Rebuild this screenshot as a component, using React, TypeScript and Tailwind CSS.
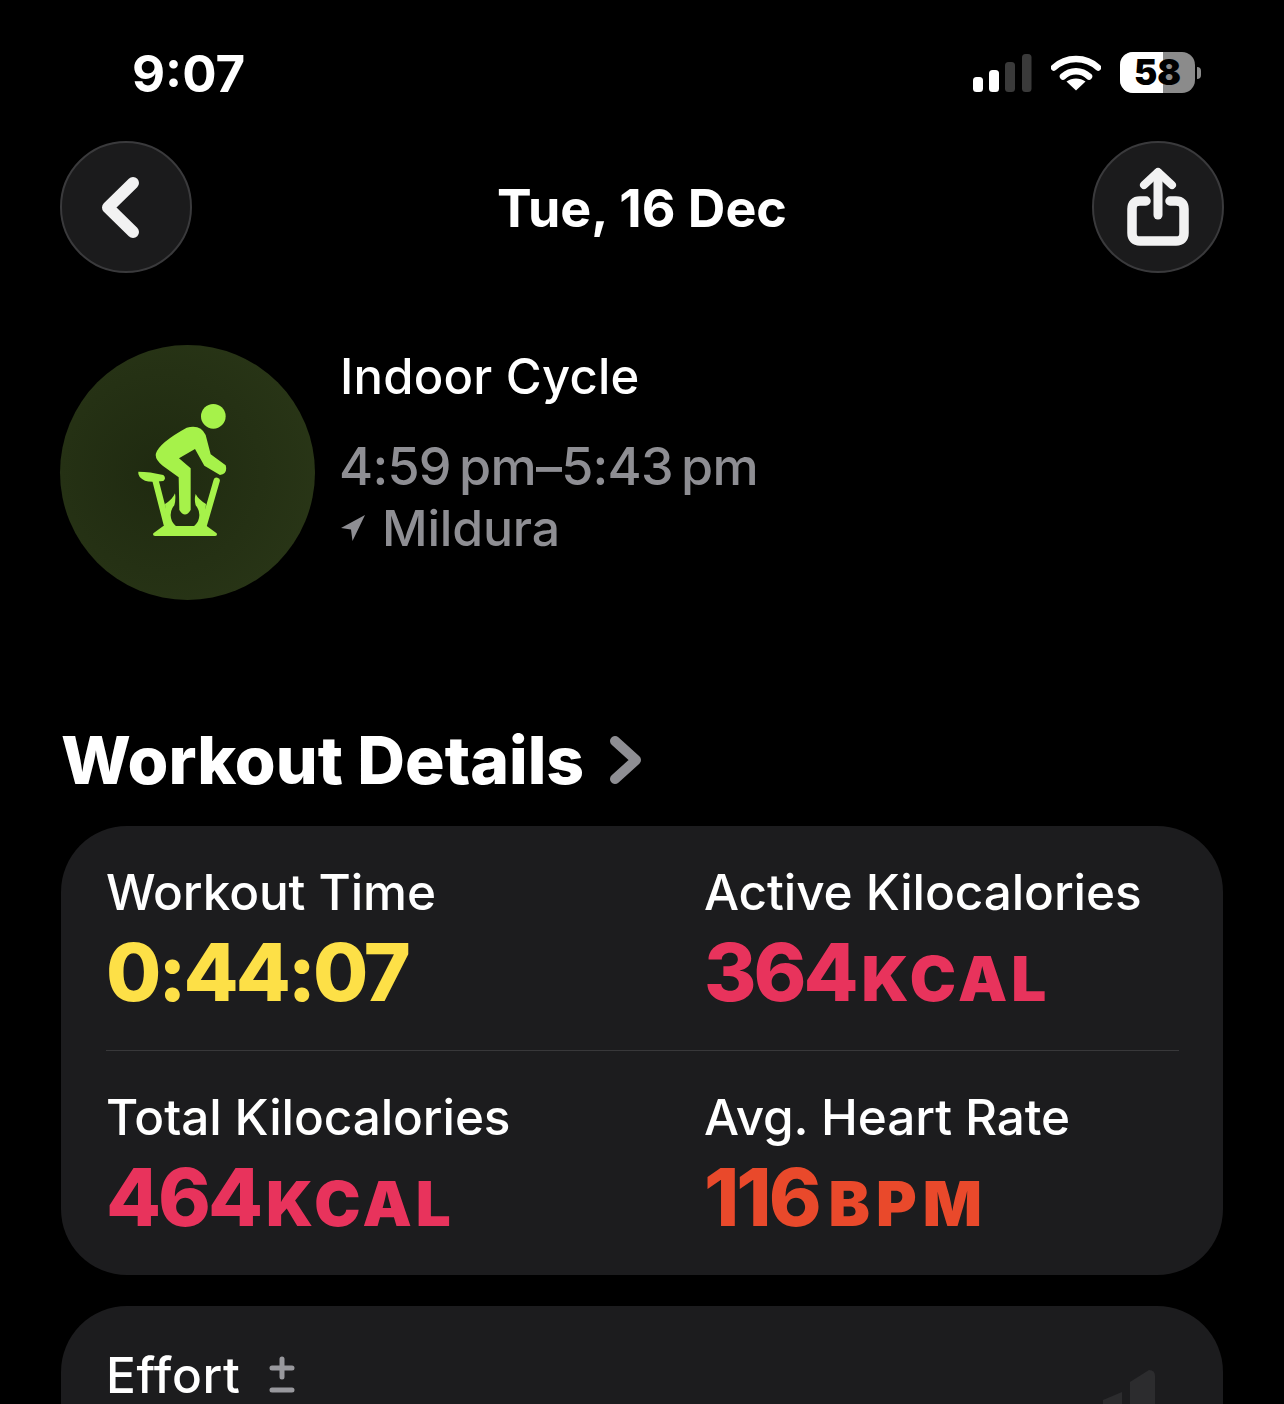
const sans = "font-[family-name:Inter,sans-serif]";

function SignalIcon() {
  return (
    <svg width="60" height="38" viewBox="0 0 60 38" className="block">
      <rect x="0" y="23" width="10" height="15" rx="3.5" fill="#fff" />
      <rect x="16" y="16" width="10" height="22" rx="3.5" fill="#fff" />
      <rect x="32" y="8" width="10" height="30" rx="3.5" fill="#3a3a3a" />
      <rect x="49" y="0" width="9.5" height="38" rx="3.5" fill="#3a3a3a" />
    </svg>
  );
}

function WifiIcon() {
  return (
    <svg width="50" height="37" viewBox="0 0 50 37" className="block">
      <path d="M3 13.5C15 2 35 2 47 13.5" fill="none" stroke="#fff" strokeWidth="6.5" strokeLinecap="round" />
      <path d="M12 22.5C19.5 15.5 30.5 15.5 38 22.5" fill="none" stroke="#fff" strokeWidth="6.5" strokeLinecap="round" />
      <path d="M25 36.5L15.5 27.5C21 23.5 29 23.5 34.5 27.5Z" fill="#fff" />
    </svg>
  );
}

function Battery() {
  return (
    <div className="flex items-center">
      <div className="relative flex h-[41px] w-[75px] items-center justify-center overflow-hidden rounded-[13px] bg-[#8b8b8b]">
        <div className="absolute inset-y-0 left-0 w-[43px] bg-white" />
        <span className={`${sans} relative text-[35px] leading-none font-black text-black`}>58</span>
      </div>
      <div className="ml-[2px] h-[12px] w-[4px] rounded-r-full bg-[#8b8b8b]" />
    </div>
  );
}

function StatusBar() {
  return (
    <div className="flex h-[141px] items-start justify-between pt-[47px] pr-[83px] pl-[132px]">
      <span className={`${sans} text-[51px] leading-[54px] font-bold text-white`}>9:07</span>
      <div className="flex items-center pt-[5px]">
        <SignalIcon />
        <div className="ml-[18px]"><WifiIcon /></div>
        <div className="ml-[19px]"><Battery /></div>
      </div>
    </div>
  );
}

function RoundButton({ children }: Readonly<{ children: React.ReactNode }>) {
  return (
    <div className="flex h-[132px] w-[132px] items-center justify-center rounded-full border-2 border-[#3a3a3c] bg-[#1b1b1c]">
      {children}
    </div>
  );
}

function NavBar() {
  return (
    <div className="flex items-center justify-between px-[60px]">
      <RoundButton>
        <svg width="40" height="64" viewBox="0 0 40 64" className="mt-[2px] mr-[10px] block">
          <path d="M32 7L7 31.5L32 56" fill="none" stroke="#f2f2f2" strokeWidth="12" strokeLinecap="round" strokeLinejoin="round" />
        </svg>
      </RoundButton>
      <span className={`${sans} mt-[4px] text-[52px] leading-none font-bold text-white`}>Tue, 16 Dec</span>
      <RoundButton>
        <svg width="62" height="80" viewBox="0 0 62 80" className="block">
          <path d="M19 34H13Q5 34 5 42V66Q5 74 13 74H49Q57 74 57 66V42Q57 34 49 34H43" fill="none" stroke="#f2f2f2" strokeWidth="9.5" strokeLinecap="round" />
          <path d="M31 48V6" fill="none" stroke="#f2f2f2" strokeWidth="9" strokeLinecap="round" />
          <path d="M17 18L31 5L45 18" fill="none" stroke="#f2f2f2" strokeWidth="8" strokeLinecap="round" strokeLinejoin="round" />
        </svg>
      </RoundButton>
    </div>
  );
}

// viewBox is 3x the on-screen size, traced from a zoomed crop
function BikeIcon() {
  const c = "#a6f24a";
  return (
    <svg width="255" height="255" viewBox="30 15 765 765" className="block">
      <circle cx="490" cy="229" r="37" fill={c} />
      <path
        d="M318 340Q328 308 410 263Q452 252 467 285L482 343L527 376Q534 402 510 405L463 377L435 327L387 355L422 385V510Q405 537 388 510L386 412L338 377Q313 357 318 340Z"
        fill={c}
      />
      <path d="M265 395Q300 395 340 405Q350 415 340 423Q300 428 285 422Q262 410 265 395Z" fill={c} />
      <path d="M316 420L352 560" fill="none" stroke={c} strokeWidth="19" strokeLinecap="round" />
      <path d="M500 422L460 560" fill="none" stroke={c} strokeWidth="19" strokeLinecap="round" />
      <path
        d="M375 460Q368 478 345 492L352 575H460L468 492Q445 478 437 462Q432 478 437 496A43 43 0 1 1 373 496Q378 478 375 460Z"
        fill={c}
      />
      <path d="M310 580L340 558H470L500 580Q503 588 495 588H316Q307 588 310 580Z" fill={c} />
    </svg>
  );
}

function WorkoutHeader() {
  return (
    <div className="mt-[72px] flex px-[60px]">
      <div className="h-[255px] w-[255px] rounded-full bg-[radial-gradient(circle_at_40%_50%,#1f2a10,#2b3818)]">
        <BikeIcon />
      </div>
      <div className={`${sans} ml-[25px] flex flex-col`}>
        <span className="mt-[4px] text-[49px] leading-[56px] font-medium tracking-[0.2px] text-white">Indoor Cycle</span>
        <span className="mt-[32px] -ml-[1px] text-[52px] leading-[60px] font-medium tracking-[-0.75px] text-[#8e8e93]">4:59{"\u2009"}pm–5:43{"\u2009"}pm</span>
        <span className="flex items-center text-[50px] leading-[62px] font-medium tracking-[-0.2px] text-[#8e8e93]">
          <svg width="26" height="28" viewBox="0 0 26 28" className="mr-[16px] block">
            <path d="M25 1L1 14L11 15.5L12.5 27Z" fill="#8e8e93" />
          </svg>
          Mildura
        </span>
      </div>
    </div>
  );
}

function Metric({
  label,
  value,
  unit,
  color,
  unitClass = "ml-[6px] tracking-[4px]",
}: Readonly<{ label: string; value: string; unit?: string; color: string; unitClass?: string }>) {
  return (
    <div className={sans}>
      <div className="text-[49.5px] leading-[56px] font-medium tracking-[-0.1px] text-white">{label}</div>
      <div className={`mt-[10px] text-[80px] leading-[84px] font-extrabold tracking-[-3px] ${color}`}>
        {value}
        {unit && <span className={`text-[62px] font-black ${unitClass}`}>{unit}</span>}
      </div>
    </div>
  );
}

function DetailsCard() {
  return (
    <div className="mx-[61px] mt-[28px] rounded-[66px] bg-[#1c1c1e] pt-[38px] pr-[44px] pb-[29px] pl-[45px]">
      <div className="grid grid-cols-[598px_1fr] border-b border-[#38383a] pb-[29px]">
        <Metric label="Workout Time" value="0:44:07" color="text-[#fde047]" />
        <Metric label="Active Kilocalories" value="364" unit="KCAL" color="text-[#e8335c]" />
      </div>
      <div className="grid grid-cols-[598px_1fr] pt-[38px]">
        <Metric label="Total Kilocalories" value="464" unit="KCAL" color="text-[#e8335c]" />
        <Metric label="Avg. Heart Rate" value="116" unit="BPM" color="text-[#e9492b]" unitClass="ml-[10px] tracking-[6px]" />
      </div>
    </div>
  );
}

function EffortCard() {
  return (
    <div className="mx-[61px] mt-[31px] flex h-[140px] items-start justify-between rounded-t-[66px] bg-[#1c1c1e] pt-[44px] pr-[68px] pl-[45px]">
      <div className={`${sans} flex items-center`}>
        <span className="text-[49.5px] leading-[50px] font-medium tracking-[0.6px] text-white">Effort</span>
        <svg width="26" height="38" viewBox="0 0 26 38" className="ml-[29px] block">
          <path d="M13 3V21M3 12H23M3 34H23" fill="none" stroke="#98989d" strokeWidth="5" strokeLinecap="round" />
        </svg>
      </div>
      <svg width="52" height="40" viewBox="0 0 52 40" className="mt-[20px] block">
        <path d="M0 40V30L19 22V40Z" fill="#2c2c2e" />
        <path d="M27 40V12L46 0Q52 0 52 6V40Z" fill="#2c2c2e" />
      </svg>
    </div>
  );
}

export default function App() {
  return (
    <div className="h-[1404px] w-[1284px] overflow-hidden bg-black">
      <StatusBar />
      <NavBar />
      <WorkoutHeader />
      <h2 className={`${sans} mt-[122px] flex items-center pr-[62px] pl-[61px] text-[66px] leading-[76px] font-extrabold text-white`}>
        Workout Details
        <svg width="34" height="50" viewBox="0 0 34 50" className="ml-[25px] block">
          <path d="M6 6L27 25L6 44" fill="none" stroke="#8e8e93" strokeWidth="10" strokeLinecap="round" strokeLinejoin="round" />
        </svg>
      </h2>
      <DetailsCard />
      <EffortCard />
    </div>
  );
}
